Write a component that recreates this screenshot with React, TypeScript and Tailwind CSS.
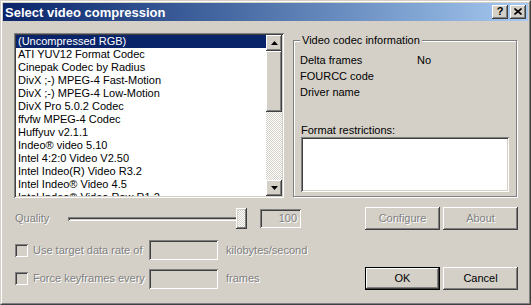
import React from "react";

const raised =
  "shadow-[inset_-1px_-1px_0_#404040,inset_1px_1px_0_#fff,inset_-2px_-2px_0_#808080,inset_2px_2px_0_#d4d0c8]";
const sunken =
  "shadow-[inset_1px_1px_0_#808080,inset_-1px_-1px_0_#fff,inset_2px_2px_0_#404040,inset_-2px_-2px_0_#d4d0c8]";
const dimText = "text-[#808080] [text-shadow:1px_1px_0_#fff]";
const checker =
  "bg-[repeating-conic-gradient(#fff_0_25%,#d4d0c8_0_50%)] bg-[length:2px_2px]";

const codecs = [
  "(Uncompressed RGB)",
  "ATI YUV12 Format Codec",
  "Cinepak Codec by Radius",
  "DivX ;-) MPEG-4 Fast-Motion",
  "DivX ;-) MPEG-4 Low-Motion",
  "DivX Pro 5.0.2 Codec",
  "ffvfw MPEG-4 Codec",
  "Huffyuv v2.1.1",
  "Indeo® video 5.10",
  "Intel 4:2:0 Video V2.50",
  "Intel Indeo(R) Video R3.2",
  "Intel Indeo® Video 4.5",
  "Intel Indeo® Video Raw R1.2",
];

const Arrow = ({ down }: { down?: boolean }) => (
  <svg width="7" height="4" viewBox="0 0 7 4">
    <path d={down ? "M0 0h7L3.5 4z" : "M3.5 0L7 4H0z"} fill="#000" />
  </svg>
);

const Button = ({
  children,
  disabled,
  isDefault,
}: {
  children: React.ReactNode;
  disabled?: boolean;
  isDefault?: boolean;
}) => (
  <div
    className={`w-[75px] h-[23px] bg-[#d4d0c8] ${
      isDefault ? "border border-black" : ""
    } flex`}
  >
    <div
      className={`flex-1 flex items-center justify-center ${raised} ${
        disabled ? dimText : "text-black"
      }`}
    >
      {children}
    </div>
  </div>
);

const Checkbox = () => (
  <div className={`w-[13px] h-[13px] bg-[#d4d0c8] ${sunken}`} />
);

const Field = ({
  className,
  children,
}: {
  className: string;
  children?: React.ReactNode;
}) => (
  <div className={`${className} ${sunken} bg-[#d4d0c8] flex items-center justify-end pr-[4px] ${dimText}`}>
    {children}
  </div>
);

export default function App() {
  return (
    <div
      className="w-[531px] h-[305px] bg-[#d4d0c8] border border-t-[#d4d0c8] border-l-[#d4d0c8] border-b-[#404040] border-r-[#404040] text-[11px] leading-[13px] text-black select-none"
      style={{ fontFamily: '"Liberation Sans", Arial, sans-serif' }}
    >
      <div className="h-full border border-t-white border-l-white border-b-[#808080] border-r-[#808080] p-px flex flex-col">
        {/* title bar */}
        <div className="h-[18px] bg-linear-to-r from-[#0a246a] to-[#a6caf0] flex items-center pl-[2px] pr-[2px]">
          <span className="text-white font-bold text-[13px] leading-[15px] flex-1">
            Select video compression
          </span>
          <div className="flex gap-[2px]">
            <div className={`w-[16px] h-[14px] bg-[#d4d0c8] ${raised} flex items-center justify-center font-bold text-[11px] leading-[11px] pb-px`}>
              ?
            </div>
            <div className={`w-[16px] h-[14px] bg-[#d4d0c8] ${raised} flex items-center justify-center pb-px`}>
              <svg width="8" height="7" viewBox="0 0 8 7">
                <path d="M0.5 0.5L7.5 6.5M7.5 0.5L0.5 6.5" stroke="#000" strokeWidth="1.6" />
              </svg>
            </div>
          </div>
        </div>

        {/* body */}
        <div className="flex-1 flex flex-col pl-[11px] pr-[10px] pt-[12px]">
          <div className="flex h-[165px]">
            {/* listbox */}
            <div className={`w-[270px] h-full bg-white ${sunken} p-[2px] flex`}>
              <div className="flex-1 overflow-hidden bg-white">
                {codecs.map((c, i) => (
                  <div
                    key={c}
                    className={`h-[13px] pl-[2px] whitespace-nowrap ${
                      i === 0 ? "bg-[#0a246a] text-white" : "text-black"
                    }`}
                  >
                    {c}
                  </div>
                ))}
              </div>
              <div className="w-[16px] flex flex-col">
                <div className={`h-[16px] bg-[#d4d0c8] ${raised} flex items-center justify-center`}>
                  <Arrow />
                </div>
                <div className={`h-[61px] bg-[#d4d0c8] ${raised}`} />
                <div className={`flex-1 ${checker}`} />
                <div className={`h-[16px] bg-[#d4d0c8] ${raised} flex items-center justify-center`}>
                  <Arrow down />
                </div>
              </div>
            </div>

            {/* group box */}
            <div className="relative ml-[9px] mt-[7px] w-[224px] h-[157px] border border-[#808080] shadow-[1px_1px_0_#fff,inset_1px_1px_0_#fff] pl-[6px] pt-[11px] flex flex-col">
              <span className="absolute left-[6px] -top-[7px] px-[2px] bg-[#d4d0c8]">
                Video codec information
              </span>
              <div className="flex h-[16px] items-center">
                <span className="w-[117px]">Delta frames</span>
                <span>No</span>
              </div>
              <div className="flex h-[16px] items-center">FOURCC code</div>
              <div className="flex h-[16px] items-center">Driver name</div>
              <div className="mt-[24px] ml-px">Format restrictions:</div>
              <div className={`ml-px w-[208px] h-[55px] bg-white ${sunken}`} />
            </div>
          </div>

          {/* quality row */}
          <div className="mt-[9px] h-[23px] flex items-center pl-px">
            <span className={`w-[53px] ${dimText}`}>Quality</span>
            <div className="w-[179px] h-[21px] flex items-center">
              <div className={`w-[169px] h-[4px] ${sunken}`} />
              <div className={`w-[11px] h-[21px] -ml-px ${raised} p-[2px]`}>
                <div className={`w-full h-full ${checker}`} />
              </div>
            </div>
            <Field className="ml-[13px] w-[41px] h-[19px]">100</Field>
            <div className="ml-[64px] flex gap-[3px]">
              <Button disabled>Configure</Button>
              <Button disabled>About</Button>
            </div>
          </div>

          {/* target data rate */}
          <div className="mt-[10px] h-[20px] flex items-center pl-px">
            <Checkbox />
            <span className={`ml-[5px] w-[116px] ${dimText}`}>Use target data rate of</span>
            <Field className="w-[69px] h-[20px]" />
            <span className={`ml-[8px] ${dimText}`}>kilobytes/second</span>
          </div>

          {/* keyframes */}
          <div className="mt-[7px] h-[23px] flex items-center pl-px">
            <Checkbox />
            <span className={`ml-[5px] w-[116px] ${dimText}`}>Force keyframes every</span>
            <Field className="w-[69px] h-[20px]" />
            <span className={`ml-[8px] ${dimText}`}>frames</span>
            <div className="ml-auto flex gap-[3px]">
              <Button isDefault>OK</Button>
              <Button>Cancel</Button>
            </div>
          </div>
        </div>
      </div>
    </div>
  );
}
